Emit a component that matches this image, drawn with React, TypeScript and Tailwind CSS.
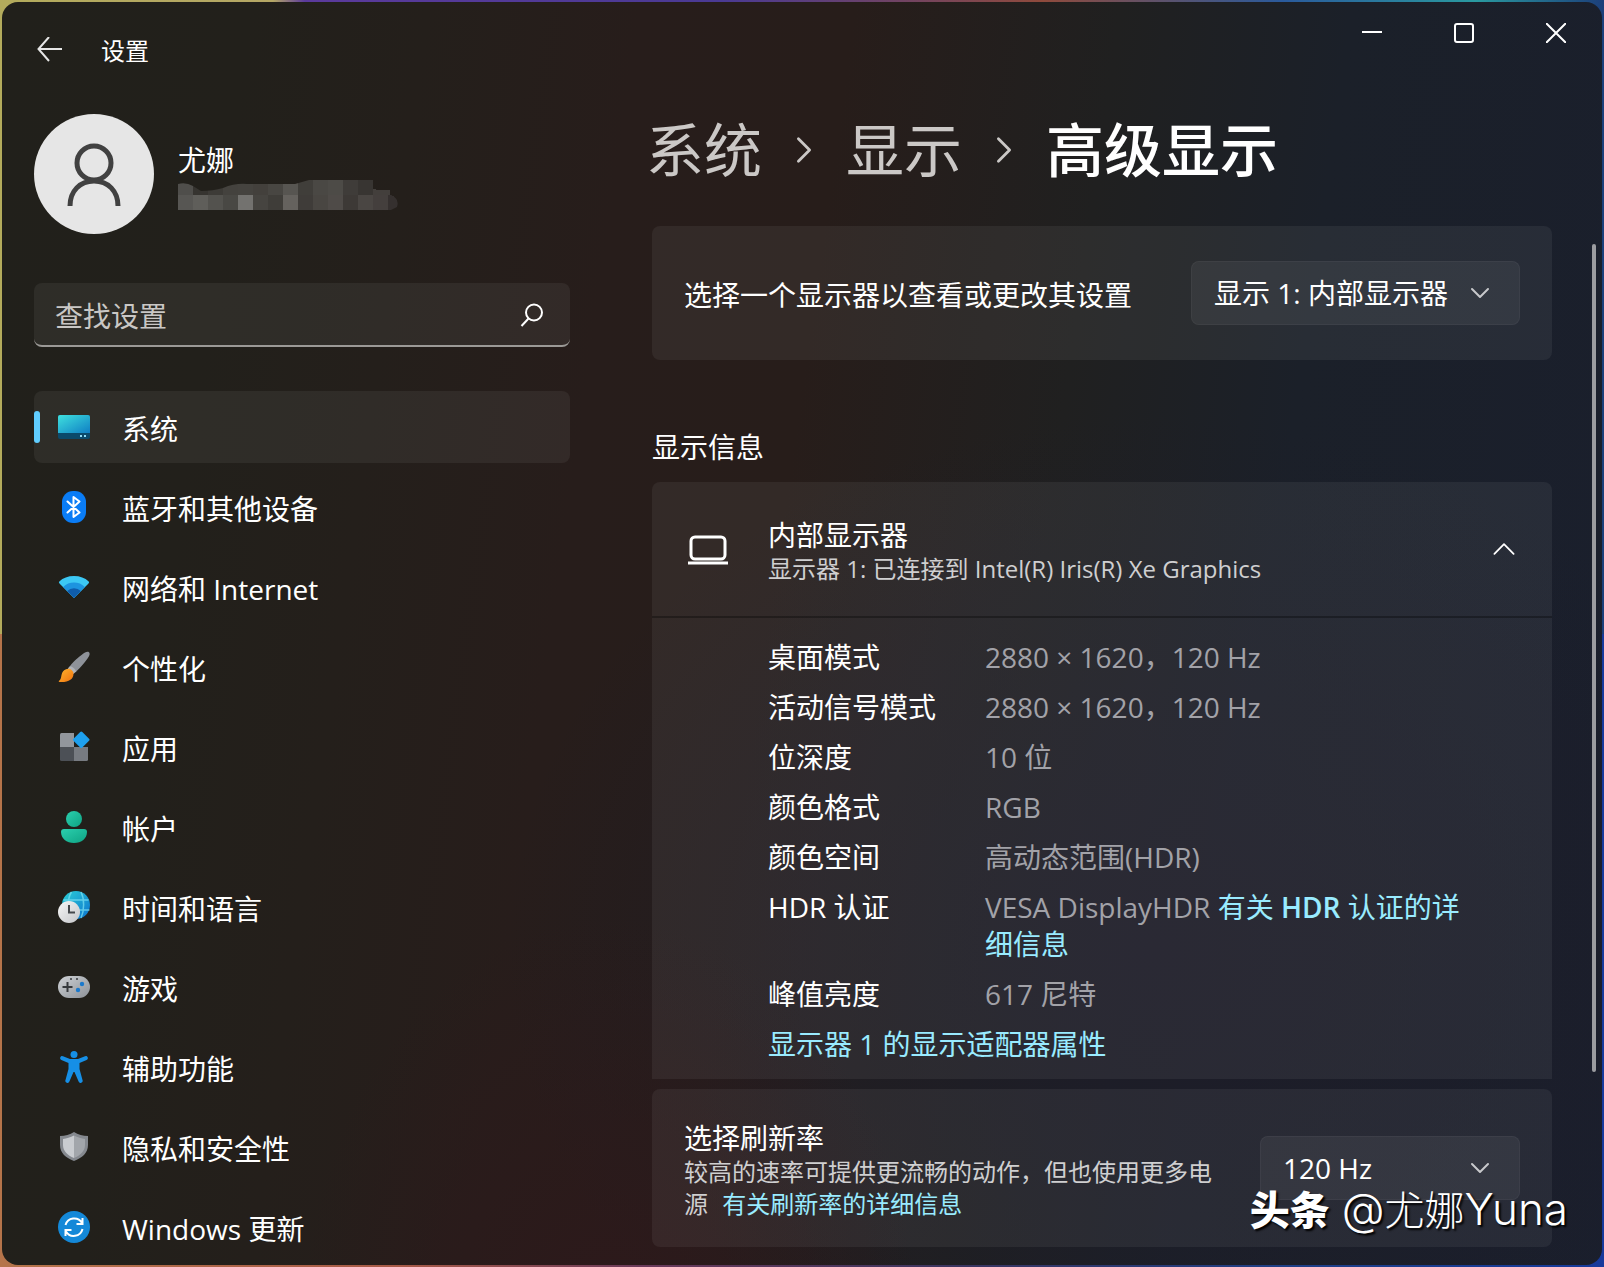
import type { ReactNode } from "react";

const cjk = "font-['Open_Sans','Noto_Sans_CJK_SC',sans-serif]";

function SystemIcon() {
  return (
    <svg viewBox="0 0 32 32" className="size-8">
      <defs>
        <linearGradient id="sys" x1="0" y1="0" x2="1" y2="1">
          <stop offset="0" stopColor="#3fe0de" />
          <stop offset="1" stopColor="#0f7fc4" />
        </linearGradient>
      </defs>
      <rect y="4" width="32" height="24" rx="2" fill="#0b4a6b" />
      <path d="M2 4h28a2 2 0 0 1 2 2v16H0V6a2 2 0 0 1 2-2z" fill="url(#sys)" />
      <rect x="22" y="24" width="2" height="2" fill="#8fdcf5" />
      <rect x="26" y="24" width="2" height="2" fill="#8fdcf5" />
    </svg>
  );
}

function BluetoothIcon() {
  return (
    <svg viewBox="0 0 32 32" className="size-8">
      <rect x="4" width="24" height="32" rx="11" fill="#0a7cf5" />
      <path
        d="M9.500 10.500L21.500 21.500 15.500 26V6l6 4.500L9.500 21.500"
        fill="none"
        stroke="#fff"
        strokeWidth="2"
        strokeLinejoin="round"
        strokeLinecap="round"
      />
    </svg>
  );
}

function WifiIcon() {
  return (
    <svg viewBox="0 0 32 32" className="size-8">
      <path d="M1.500 12.500a1.500 1.500 0 0 1-.2-2.100C5 7 10 5 16 5s11 2 14.700 5.400a1.500 1.500 0 0 1-.2 2.100L16 27z" fill="#3cc8f4" />
      <path d="M5.200 16a15.500 15.500 0 0 1 21.600 0L16 27z" fill="#1d94e0" />
      <path d="M9.200 20a9.800 9.800 0 0 1 13.600 0L16 27z" fill="#0f5cab" />
    </svg>
  );
}

function BrushIcon() {
  return (
    <svg viewBox="0 0 32 32" className="size-8">
      <defs>
        <linearGradient id="brush" x1="0" y1="0" x2="1" y2="1">
          <stop offset="0" stopColor="#ffb52e" />
          <stop offset="1" stopColor="#f0720f" />
        </linearGradient>
      </defs>
      <path d="M31 1.200c1 1 .8 2.600-.2 4.300-2.500 4-8 11-12.500 15L12 15C16 10 23 4 27 1.600c1.600-1 3-1.200 4-.4z" fill="#8e9299" />
      <path d="M12 15c2 .4 5.400 3 6.300 5.500l-3 2.500-5.500-5.500z" fill="#b0b3b8" />
      <path d="M15.500 22.500c0 6-5 9-14 8.500-.8-.1-1-.8-.4-1.200C4 28 2.500 24 5 20.500c2.500-3 6.500-3.500 8.500-1.500 1 .9 2 2 2 3.500z" fill="url(#brush)" />
    </svg>
  );
}

function AppsIcon() {
  return (
    <svg viewBox="0 0 32 32" className="size-8">
      <path d="M3.500 2H16v14H2V3.500A1.500 1.500 0 0 1 3.500 2z" fill="#92969c" />
      <path d="M2 16h14v14H3.500A1.500 1.500 0 0 1 2 28.500z" fill="#4c5056" />
      <path d="M16 16h14v12.500a1.500 1.500 0 0 1-1.500 1.500H16z" fill="#777b81" />
      <rect x="17" y="2.500" width="12.500" height="12.500" rx="1.500" transform="rotate(45 23.250 8.750)" fill="#1ea0ee" />
    </svg>
  );
}

function AccountIcon() {
  return (
    <svg viewBox="0 0 32 32" className="size-8">
      <defs>
        <linearGradient id="acc" x1="0" y1="0" x2="1" y2="1">
          <stop offset="0" stopColor="#2bcfae" />
          <stop offset="1" stopColor="#0ea383" />
        </linearGradient>
      </defs>
      <circle cx="16" cy="8" r="8" fill="url(#acc)" />
      <path d="M6 18h20a3 3 0 0 1 3 3c0 6.500-5.500 11-13 11S3 27.500 3 21a3 3 0 0 1 3-3z" fill="url(#acc)" />
    </svg>
  );
}

function TimeIcon() {
  return (
    <svg viewBox="0 0 32 32" className="size-8">
      <defs>
        <linearGradient id="globe" x1="0" y1="0" x2="1" y2="1">
          <stop offset="0" stopColor="#2bd0d6" />
          <stop offset="1" stopColor="#0c72cf" />
        </linearGradient>
        <linearGradient id="clock" x1="0" y1="0" x2="1" y2="1">
          <stop offset="0" stopColor="#f7f7f7" />
          <stop offset="1" stopColor="#c4c6c9" />
        </linearGradient>
      </defs>
      <circle cx="18" cy="14" r="14" fill="url(#globe)" />
      <path
        d="M5.500 9h25M18 19h13.500M23 1c3.500 7 3.500 18 0 26M13.500 1c-2 3-3 7-3 11"
        fill="none"
        stroke="#7fe3f2"
        strokeOpacity=".7"
        strokeWidth="1.500"
      />
      <circle cx="11" cy="21" r="11" fill="url(#clock)" />
      <path d="M11 14v7.500h6" fill="none" stroke="#45484c" strokeWidth="2" />
    </svg>
  );
}

function GameIcon() {
  return (
    <svg viewBox="0 0 32 32" className="size-8">
      <defs>
        <linearGradient id="pad" x1="0" y1="0" x2="1" y2="1">
          <stop offset="0" stopColor="#cfd2d6" />
          <stop offset="1" stopColor="#8c9197" />
        </linearGradient>
      </defs>
      <rect y="5" width="32" height="22" rx="11" fill="url(#pad)" />
      <path d="M9.500 11v10M4.500 16h10" stroke="#36393d" strokeWidth="2" />
      <circle cx="13" cy="8" r="1" fill="#36393d" />
      <circle cx="19" cy="8" r="1" fill="#36393d" />
      <circle cx="24" cy="13" r="2.200" fill="#1b79cc" />
      <circle cx="20" cy="19" r="2.200" fill="#1b79cc" />
    </svg>
  );
}

function AccessIcon() {
  return (
    <svg viewBox="0 0 32 32" className="size-8">
      <circle cx="16" cy="3.500" r="3.500" fill="#168fe6" />
      <path
        d="M5 5.200L12 8h8l7-2.800a2 2 0 0 1 1.600 3.700L21.500 12v6l3 11a2 2 0 0 1-3.900 1.500L16.500 21h-1l-4.100 9.500A2 2 0 0 1 7.500 29l3-11v-6L3.400 8.900A2 2 0 0 1 5 5.200z"
        fill="#168fe6"
      />
    </svg>
  );
}

function ShieldIcon() {
  return (
    <svg viewBox="0 0 32 32" className="size-8">
      <path d="M16 1c4 2.500 9 4 14 4v9c0 8-6 13-14 16C8 27 2 22 2 14V5c5 0 10-1.500 14-4z" fill="#85898f" />
      <path d="M16 4.500C12.500 6.500 8.500 7.600 5 8v6c0 6 4.500 10.300 11 13z" fill="#c9ccd0" />
      <path d="M16 4.500c3.500 2 7.500 3.100 11 3.500v6c0 6-4.500 10.300-11 13z" fill="#a2a6ab" />
    </svg>
  );
}

function UpdateIcon() {
  return (
    <svg viewBox="0 0 32 32" className="size-8">
      <circle cx="16" cy="16" r="16" fill="#1488d8" />
      <path
        d="M7.500 14a9 9 0 0 1 16.500-2M24.500 7v6h-6M24.500 18A9 9 0 0 1 8 20.500M7.500 25v-6h6"
        fill="none"
        stroke="#fff"
        strokeWidth="2"
      />
    </svg>
  );
}

const navItems: { label: string; icon: ReactNode }[] = [
  { label: "系统", icon: <SystemIcon /> },
  { label: "蓝牙和其他设备", icon: <BluetoothIcon /> },
  { label: "网络和 Internet", icon: <WifiIcon /> },
  { label: "个性化", icon: <BrushIcon /> },
  { label: "应用", icon: <AppsIcon /> },
  { label: "帐户", icon: <AccountIcon /> },
  { label: "时间和语言", icon: <TimeIcon /> },
  { label: "游戏", icon: <GameIcon /> },
  { label: "辅助功能", icon: <AccessIcon /> },
  { label: "隐私和安全性", icon: <ShieldIcon /> },
  { label: "Windows 更新", icon: <UpdateIcon /> },
];

const details: { label: string; value: string; link?: ReactNode }[] = [
  { label: "桌面模式", value: "2880 × 1620，120 Hz" },
  { label: "活动信号模式", value: "2880 × 1620，120 Hz" },
  { label: "位深度", value: "10 位" },
  { label: "颜色格式", value: "RGB" },
  { label: "颜色空间", value: "高动态范围(HDR)" },
  {
    label: "HDR 认证",
    value: "VESA DisplayHDR ",
    link: (
      <>
        有关 <span className="font-semibold">HDR</span> 认证的详细信息
      </>
    ),
  },
  { label: "峰值亮度", value: "617 尼特" },
];

const mosaicTop = ["#4f4e4b", "#363430", "#3d3b37", "#44423e", "#45433f", "#43403c", "#484642", "#575551", "#403e3a", "#4a4844", "#4d4b47", "#3f3c39", "#383532"];
const mosaicBottom = ["#575653", "#5f5e5a", "#53524e", "#494844", "#73726f", "#464440", "#3f3d39", "#65625e", "#3f3c39", "#494642", "#4f4b48", "#3d3936", "#4a4643", "#443f3d", "#35302f"];

function HiddenEmail() {
  return (
    <svg width="220" height="30" viewBox="0 0 220 30" role="img" aria-label="邮箱已隐藏">
      <clipPath id="smudge">
        <path d="M0 4q8-2 15 2l8 5q12 0 22-3 12-5 24-4h48l14-4h64q5 3 3 10h14v5q10 3 7 12l-8 4h-42l-8 3H17v-3H0z" />
      </clipPath>
      <g clipPath="url(#smudge)">
        {mosaicTop.map((fill, i) => (
          <rect key={i} x={i * 15} width="15" height="16" fill={fill} />
        ))}
        <rect x="195" y="9" width="25" height="8" fill="#433f3c" />
        {mosaicBottom.map((fill, i) => (
          <rect key={i} x={i * 15} y="15" width="15" height="15" fill={fill} />
        ))}
      </g>
    </svg>
  );
}

function Chevron({ className }: { className: string }) {
  return (
    <svg viewBox="0 0 20 20" className={className} fill="none" stroke="currentColor" strokeWidth="2" strokeLinecap="round" strokeLinejoin="round">
      <path d="M2 6l8 8 8-8" />
    </svg>
  );
}

function Picker({ label, options, className }: { label: string; options: string[]; className: string }) {
  return (
    <div className={`relative shrink-0 ${className}`}>
      <select
        aria-label={label}
        className="h-16 w-full appearance-none rounded-lg border border-white/4 bg-white/6 pl-[22px] pr-14 text-[28px] text-white"
      >
        {options.map((option) => (
          <option key={option}>{option}</option>
        ))}
      </select>
      <Chevron className="pointer-events-none absolute right-[30px] top-[22px] size-5 text-[#c8c9cc]" />
    </div>
  );
}

function TitleBar() {
  return (
    <header className="flex h-24 items-start justify-between">
      <div className="flex h-24 items-center gap-[38px] pl-[35px] text-white">
        <button type="button" aria-label="返回">
          <svg viewBox="0 0 26 26" className="size-[26px]" fill="none" stroke="#e6e6e6" strokeWidth="2">
            <path d="M25 12H2M12 0L1.500 12 12 24" />
          </svg>
        </button>
        <span className="pt-0.5 text-2xl">设置</span>
      </div>
      <div className="flex text-white">
        <button type="button" aria-label="最小化" className="flex h-[62px] w-[92px] items-center justify-center">
          <svg viewBox="0 0 20 20" className="size-5" stroke="currentColor" strokeWidth="2">
            <path d="M0 9h20" />
          </svg>
        </button>
        <button type="button" aria-label="最大化" className="flex h-[62px] w-[92px] items-center justify-center">
          <svg viewBox="0 0 20 20" className="size-5" fill="none" stroke="currentColor" strokeWidth="2">
            <rect x="1" y="1" width="18" height="18" rx="2" />
          </svg>
        </button>
        <button type="button" aria-label="关闭" className="flex h-[62px] w-[92px] items-center justify-center">
          <svg viewBox="0 0 20 20" className="size-5" stroke="currentColor" strokeWidth="2">
            <path d="M0 0l20 20M20 0L0 20" />
          </svg>
        </button>
      </div>
    </header>
  );
}

function Sidebar() {
  return (
    <aside className="w-[536px] shrink-0">
      <div className="flex items-center gap-6 pt-4">
        <div className="flex size-[120px] items-center justify-center rounded-full bg-[#e6e6e6]">
          <svg viewBox="0 0 54 66" className="h-[66px] w-[54px]" fill="none" stroke="#414141" strokeWidth="5">
            <circle cx="27" cy="22" r="17" />
            <path d="M3 65c0-15 10-25 24-25s24 10 24 25" />
          </svg>
        </div>
        <div className="flex flex-col gap-0.5 pt-1">
          <span className="text-[28px] leading-9 text-white">尤娜</span>
          <HiddenEmail />
        </div>
      </div>

      <div className="relative mt-[49px]">
        <input
          type="text"
          aria-label="查找设置"
          placeholder="查找设置"
          className="h-16 w-full rounded-lg border-b-2 border-[#9b9996] bg-white/6 pl-[21px] pr-16 pt-1 text-[28px] text-white placeholder:text-[#c9c7c5]"
        />
        <svg viewBox="0 0 24 24" className="absolute right-[26px] top-5 size-6" fill="none" stroke="#fff" strokeWidth="2">
          <circle cx="14" cy="9.500" r="8" />
          <path d="M8.500 15.500L1.500 23" />
        </svg>
      </div>

      <nav className="mt-11 flex flex-col gap-2">
        {navItems.map((item, i) => (
          <a
            key={item.label}
            href="#"
            className={`relative flex h-[72px] items-center gap-8 rounded-lg pl-6 text-[28px] text-white ${i === 0 ? "bg-white/6" : ""}`}
          >
            {i === 0 && <span className="absolute left-0 top-5 h-8 w-1.5 rounded-full bg-[#60cdff]" />}
            {item.icon}
            <span className="pt-1">{item.label}</span>
          </a>
        ))}
      </nav>
    </aside>
  );
}

function Breadcrumb() {
  return (
    <nav aria-label="路径" className="-ml-1.5 flex items-center gap-7 pt-3 text-[58px] leading-[80px] text-[#cbc8c6]">
      <a href="#">系统</a>
      <Chevron className="size-7 -rotate-90" />
      <a href="#">显示</a>
      <Chevron className="size-7 -rotate-90" />
      <h1 className="font-medium text-white">高级显示</h1>
    </nav>
  );
}

function DisplayInfo() {
  return (
    <section className="overflow-hidden rounded-t-lg bg-white/6">
      <div className="flex h-[136px] items-center border-b-2 border-black/30 px-9">
        <svg viewBox="0 0 40 40" className="size-10" fill="none" stroke="#fff" strokeWidth="3">
          <rect x="3" y="8" width="34" height="22" rx="4" />
          <path d="M0 34h40" />
        </svg>
        <div className="flex-1 pl-10 pt-1">
          <h3 className="text-[28px] leading-9 text-white">内部显示器</h3>
          <p className="text-2xl leading-8 text-[#cfcfd0]">
            显示器 1: 已连接到 Intel(R) Iris(R) Xe Graphics
          </p>
        </div>
        <button type="button" aria-label="折叠">
          <Chevron className="size-6 rotate-180 stroke-[1.5] text-white" />
        </button>
      </div>
      <div className="pb-4 pl-[116px] pr-[72px] pt-[21px] text-[28px] leading-[37px]">
        <dl>
          {details.map((row) => (
            <div key={row.label} className="grid grid-cols-[217px_1fr] pb-[13px]">
              <dt className="text-white">{row.label}</dt>
              <dd className="text-[#a2a2a8]">
                {row.value}
                {row.link && (
                  <a href="#" className="text-[#99ebff]">
                    {row.link}
                  </a>
                )}
              </dd>
            </div>
          ))}
        </dl>
        <a href="#" className="text-[#99ebff]">
          显示器 1 的显示适配器属性
        </a>
      </div>
    </section>
  );
}

export default function App() {
  return (
    <div
      lang="zh-CN"
      className={`relative min-h-screen bg-[linear-gradient(90deg,#b5744a_0%,#a85a48_25%,#6a3a5a_40%,#3a3560_60%,#1f3f86_80%,#173a9c_100%),linear-gradient(90deg,#b3ab5c_0%,#b5a765_17%,#5b3a9c_19%,#4a3a94_45%,#8f4a3c_65%,#2a5a9c_80%,#2a9aa0_92%,#1c3f7a_100%)] bg-[length:100%_50%,100%_100%] bg-bottom bg-no-repeat p-[2px] ${cjk}`}
    >
      <div className="min-h-[calc(100vh-4px)] rounded-2xl bg-[radial-gradient(ellipse_at_38%_105%,#2d191b_0%,#2d191b00_22%),radial-gradient(ellipse_at_72%_75%,#1d1c28_0%,#1d1c2800_40%),linear-gradient(98deg,#21201b_0%,#22201b_14%,#241f1b_24%,#271d1b_36%,#271d1a_48%,#202020_63%,#1b2029_76%,#1a1f2d_100%)]">
        <TitleBar />
        <div className="flex gap-[82px] pl-8">
          <Sidebar />
          <main className="min-w-0 flex-1 pb-[17px]">
            <Breadcrumb />

            <section className="mt-9 flex h-[134px] items-center justify-between gap-6 rounded-lg bg-white/6 px-8">
              <p className="pt-1 text-[28px] text-white">选择一个显示器以查看或更改其设置</p>
              <Picker label="显示器" options={["显示 1: 内部显示器"]} className="w-[329px]" />
            </section>

            <h2 className="mb-4 mt-[68px] text-[28px] leading-[38px] text-white">显示信息</h2>
            <DisplayInfo />

            <section className="mt-2.5 flex h-[158px] items-center justify-between gap-12 rounded-lg bg-white/6 px-8">
              <div className="pt-1">
                <h3 className="text-[28px] leading-9 text-white">选择刷新率</h3>
                <p className="text-2xl leading-8 text-[#cfcfd0]">
                  较高的速率可提供更流畅的动作，但也使用更多电源{" "}
                  <a href="#" className="pl-2 text-[#99ebff]">
                    有关刷新率的详细信息
                  </a>
                </p>
              </div>
              <Picker label="刷新率" options={["120 Hz", "60 Hz"]} className="w-[260px]" />
            </section>
          </main>
          <div className="-ml-[42px] w-[10px] shrink-0 pb-[192px] pt-[146px]">
            <div className="h-full w-1 rounded-full bg-[#9b9ca0]" />
          </div>
        </div>
      </div>

      <div className="absolute bottom-7 right-9 flex items-baseline gap-3 text-[40px] leading-[56px] text-white [text-shadow:2px_2px_2px_#000]">
        <span className="font-black">头条</span>
        <span className="font-['Inter','Noto_Sans_CJK_SC',sans-serif] font-light">
          <span className="text-[44px]">@</span>尤娜<span className="text-[44px]">Yuna</span>
        </span>
      </div>
    </div>
  );
}
